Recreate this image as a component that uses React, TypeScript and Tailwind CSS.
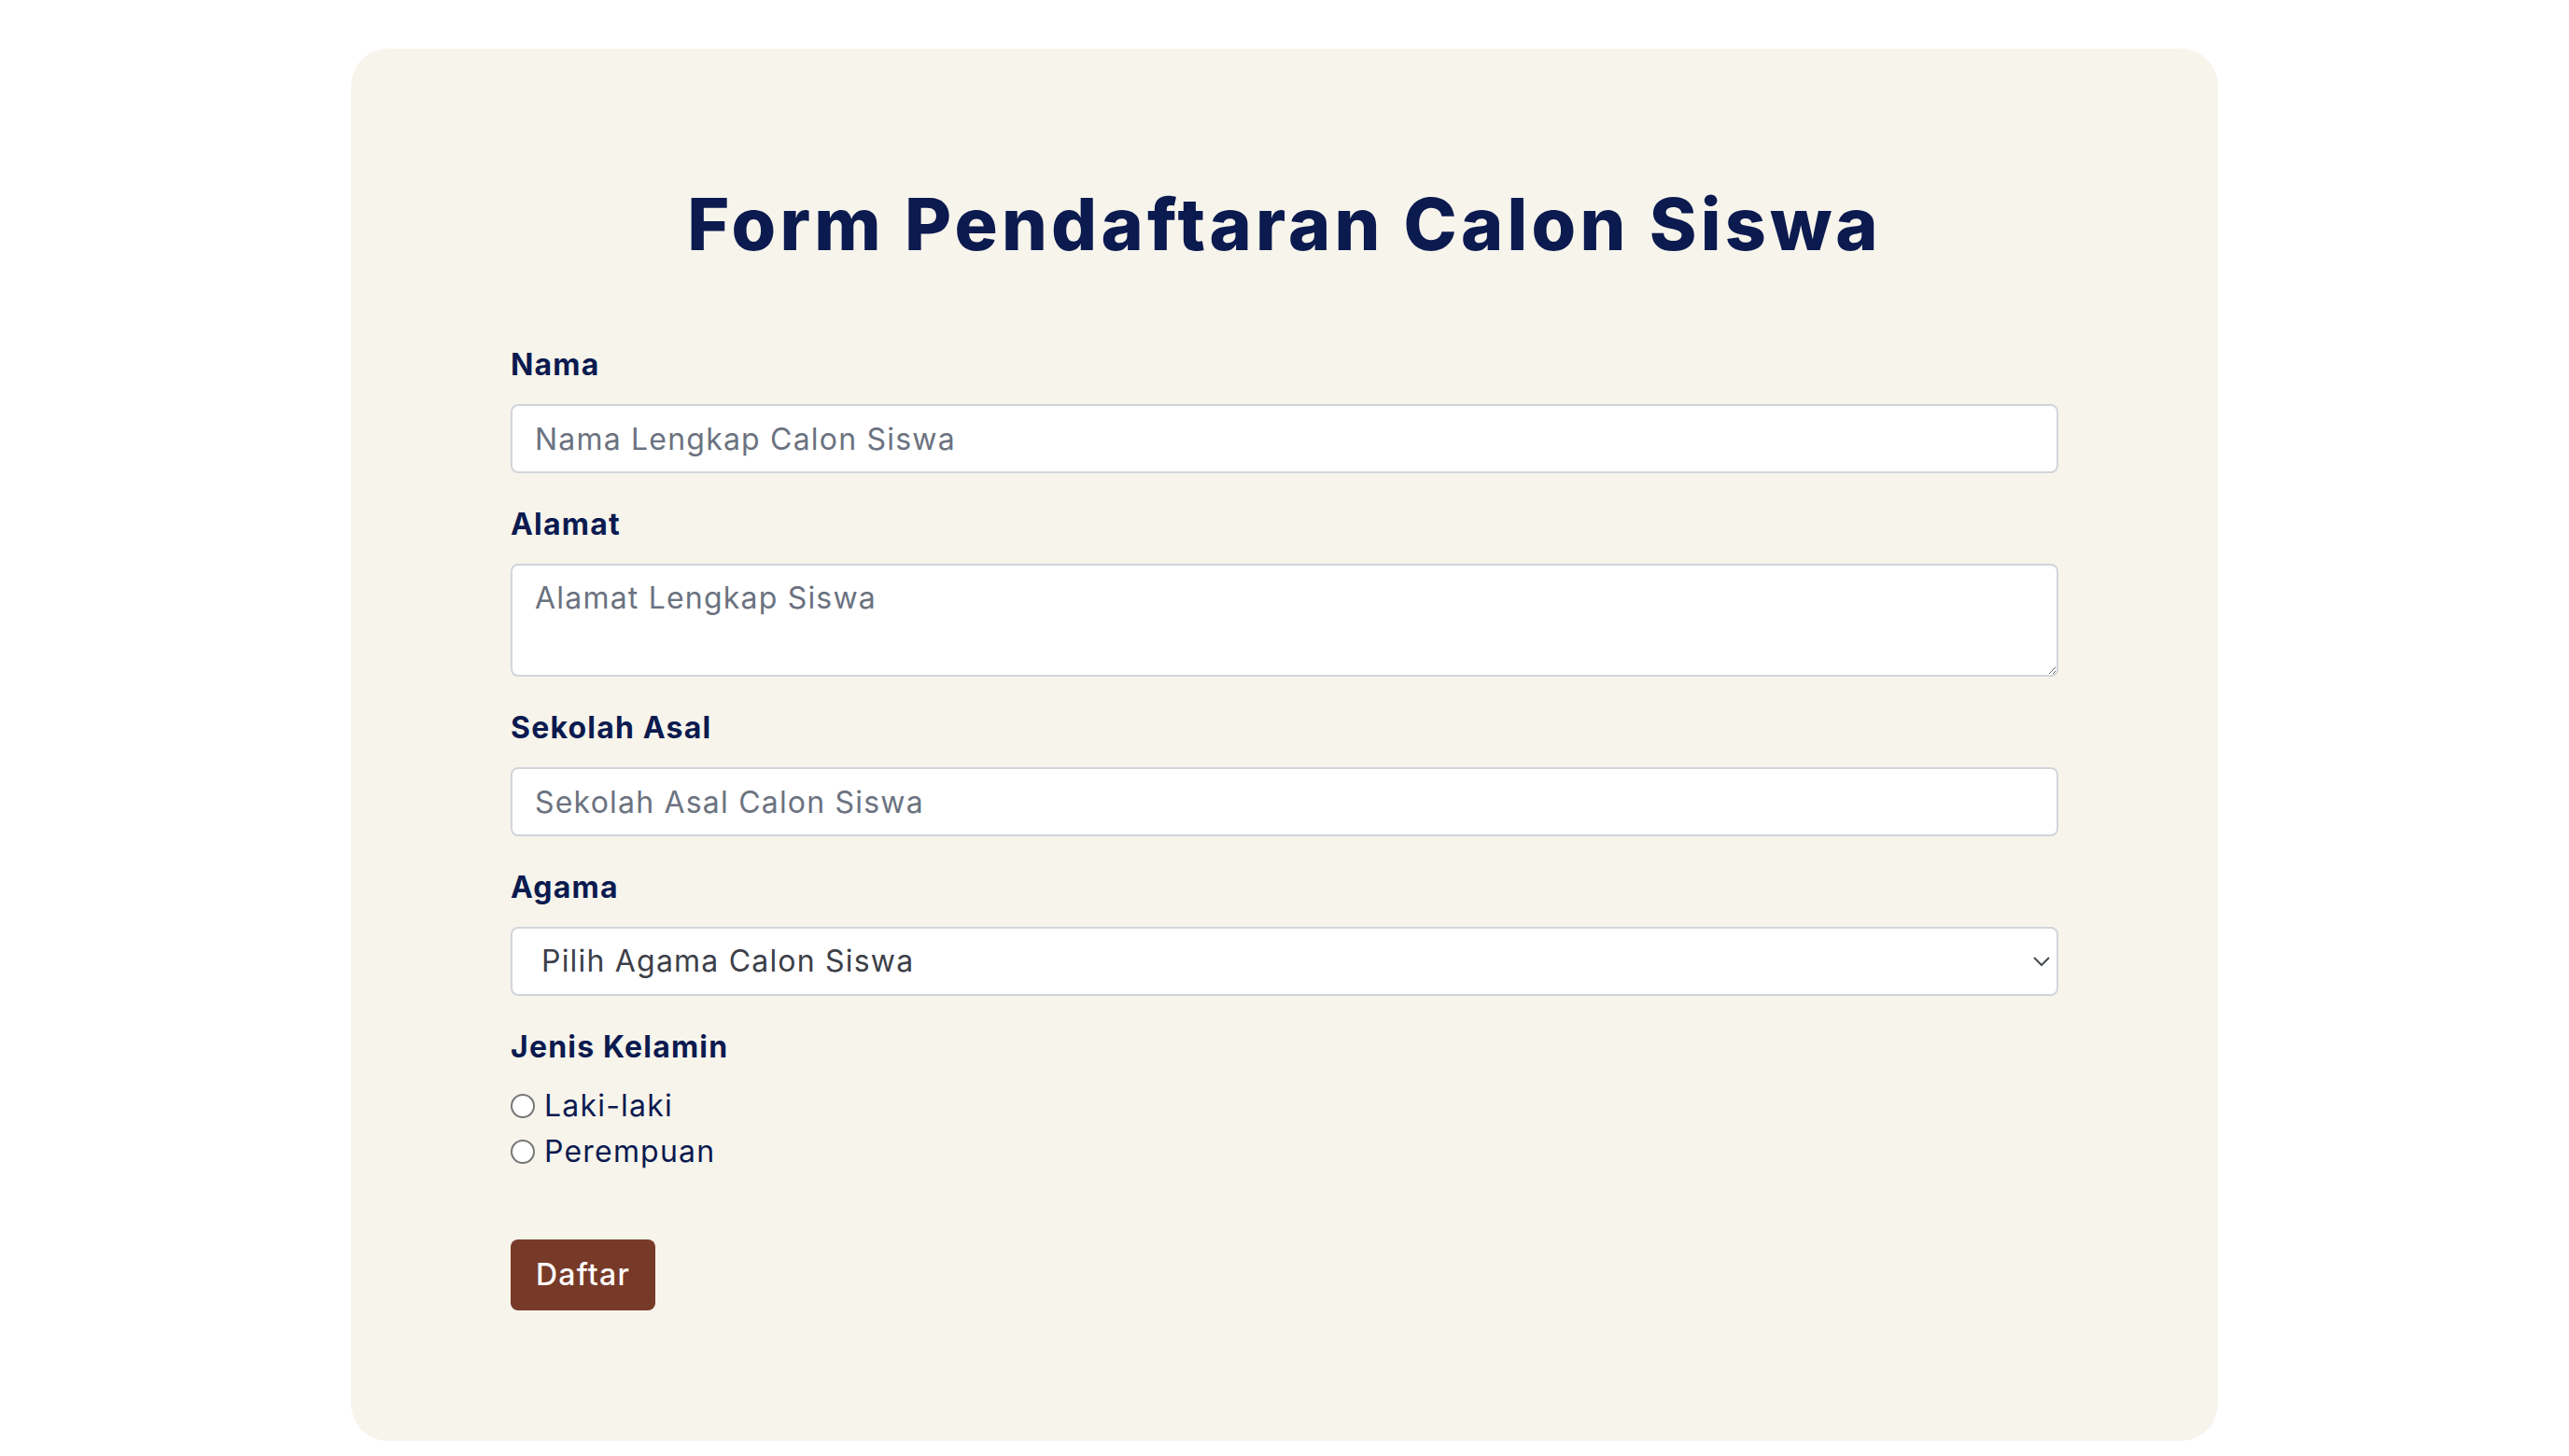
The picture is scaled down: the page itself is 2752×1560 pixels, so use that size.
import { useState } from "react";

export default function App() {
  const [gender, setGender] = useState("");

  return (
    <div className="min-h-screen bg-white font-['Inter',sans-serif] pt-[52px] pb-[18px]">
      <div className="mx-auto w-[2000px] rounded-[40px] bg-[#f7f4ec] px-[171px] pt-[140px] pb-[140px]">
        <h1 className="text-center text-[77px] leading-[96px] font-extrabold tracking-[4.2px] text-[#0b1a4f]">
          Form Pendaftaran Calon Siswa
        </h1>

        <form className="mt-[83px] flex flex-col tracking-[1.2px]" onSubmit={(e) => e.preventDefault()}>
          <label className="block text-[32px] leading-[40px] font-bold text-[#0b1a4f] mb-[22px]">
            Nama
          </label>
          <input
            type="text"
            placeholder="Nama Lengkap Calon Siswa"
            className="h-[74px] w-full rounded-lg border-2 border-[#d1d5db] bg-white px-[24px] text-[32px] tracking-[1.2px] text-[#374151] placeholder:text-[#6b7280] outline-none"
          />

          <label className="mt-[35px] block text-[32px] leading-[40px] font-bold text-[#0b1a4f] mb-[22px]">
            Alamat
          </label>
          <textarea
            placeholder="Alamat Lengkap Siswa"
            className="h-[121px] w-full rounded-lg border-2 border-[#d1d5db] bg-white px-[24px] py-[11px] text-[32px] leading-[48px] tracking-[1.2px] text-[#374151] placeholder:text-[#6b7280] outline-none"
          />

          <label className="mt-[35px] block text-[32px] leading-[40px] font-bold text-[#0b1a4f] mb-[22px]">
            Sekolah Asal
          </label>
          <input
            type="text"
            placeholder="Sekolah Asal Calon Siswa"
            className="h-[74px] w-full rounded-lg border-2 border-[#d1d5db] bg-white px-[24px] text-[32px] tracking-[1.2px] text-[#374151] placeholder:text-[#6b7280] outline-none"
          />

          <label className="mt-[35px] block text-[32px] leading-[40px] font-bold text-[#0b1a4f] mb-[22px]">
            Agama
          </label>
          <div className="relative">
            <select
              defaultValue=""
              className="h-[74px] w-full appearance-none rounded-lg border-2 border-[#d1d5db] bg-white pl-[31px] pr-[40px] text-[32px] tracking-[1.2px] text-[#3c4048] outline-none"
            >
              <option value="" disabled>
                Pilih Agama Calon Siswa
              </option>
              <option>Islam</option>
              <option>Kristen</option>
              <option>Katolik</option>
              <option>Hindu</option>
              <option>Buddha</option>
              <option>Konghucu</option>
            </select>
            <svg
              className="pointer-events-none absolute right-[9px] top-[32px]"
              width="18"
              height="10"
              viewBox="0 0 18 10"
              fill="none"
            >
              <path d="M1 1l8 8 8-8" stroke="#4b5058" strokeWidth="2.2" />
            </svg>
          </div>

          <label className="mt-[35px] block text-[32px] leading-[40px] font-bold text-[#0b1a4f] mb-[18px]">
            Jenis Kelamin
          </label>
          <div className="flex flex-col">
            {["Laki-laki", "Perempuan"].map((g) => (
              <label key={g} className="flex h-[49px] items-center gap-[10px] text-[32px] text-[#0b1a4f]">
                <input
                  type="radio"
                  name="gender"
                  checked={gender === g}
                  onChange={() => setGender(g)}
                  className="h-[26px] w-[26px] appearance-none rounded-full border-2 border-[#767676] bg-white checked:border-[8px] checked:border-[#0b57d0]"
                />
                {g}
              </label>
            ))}
          </div>

          <div className="mt-[70px]">
            <button
              type="submit"
              className="h-[76px] rounded-lg bg-[#783a28] px-[27px] text-[32px] font-medium tracking-[1.2px] text-white"
            >
              Daftar
            </button>
          </div>
        </form>
      </div>
    </div>
  );
}
